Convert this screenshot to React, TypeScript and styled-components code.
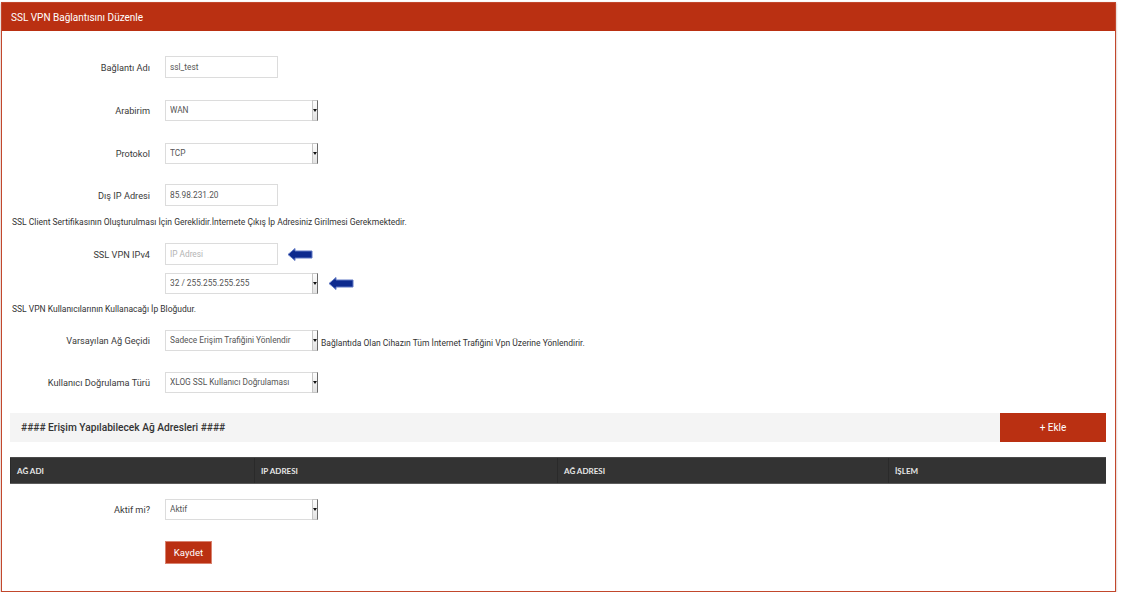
import styled, { createGlobalStyle } from 'styled-components';

const GlobalStyle = createGlobalStyle`
  html, body {
    margin: 0;
    padding: 0;
    background: #ffffff;
    font-family: Roboto, 'Liberation Sans', Arial, sans-serif;
  }
`;

const BlueArrow = () => (
  <svg width='26' height='15' viewBox='0 0 26 15'>
    <path
      d='M1 7.5 L8 1.5 L8 4 L25 4 L25 11 L8 11 L8 13.5 Z'
      fill='#0d2a8e'
      stroke='#6079c4'
      strokeWidth='1'
      strokeLinejoin='round'
    />
  </svg>
);

interface SelectProps {
  value: string;
  options?: string[];
}

const FakeSelect = ({ value, options = [] }: SelectProps) => (
  <SelectWrap>
    <SelectField defaultValue={value}>
      <option value={value}>{value}</option>
      {options.map((o) => (
        <option key={o} value={o}>
          {o}
        </option>
      ))}
    </SelectField>
    <SelectArrow>
      <Caret />
    </SelectArrow>
  </SelectWrap>
);

const App = () => {
  return (
    <>
      <GlobalStyle />
      <Panel>
        <PanelHeader>SSL VPN Bağlantısını Düzenle</PanelHeader>
        <PanelBody>
          <FormRow $top={25}>
            <Label>Bağlantı Adı</Label>
            <TextInput defaultValue='ssl_test' />
          </FormRow>

          <FormRow $top={21}>
            <Label>Arabirim</Label>
            <FakeSelect value='WAN' options={['LAN']} />
          </FormRow>

          <FormRow $top={21}>
            <Label>Protokol</Label>
            <FakeSelect value='TCP' options={['UDP']} />
          </FormRow>

          <FormRow $top={20}>
            <Label>Dış IP Adresi</Label>
            <TextInput defaultValue='85.98.231.20' />
          </FormRow>

          <HelpText $top={10}>
            SSL Client Sertifikasının Oluşturulması İçin Gereklidir.İnternete
            Çıkış İp Adresiniz Girilmesi Gerekmektedir.
          </HelpText>

          <FormRow $top={15}>
            <Label>SSL VPN IPv4</Label>
            <TextInput placeholder='IP Adresi' />
            <ArrowSlot $offset={9}>
              <BlueArrow />
            </ArrowSlot>
          </FormRow>

          <FormRow $top={7}>
            <Label />
            <FakeSelect value='32 / 255.255.255.255' />
            <ArrowSlot $offset={10}>
              <BlueArrow />
            </ArrowSlot>
          </FormRow>

          <HelpText $top={9}>
            SSL VPN Kullanıcılarının Kullanacağı İp Bloğudur.
          </HelpText>

          <FormRow $top={14}>
            <Label>Varsayılan Ağ Geçidi</Label>
            <FakeSelect value='Sadece Erişim Trafiğini Yönlendir' />
            <SideNote>
              Bağlantıda Olan Cihazın Tüm İnternet Trafiğini Vpn Üzerine
              Yönlendirir.
            </SideNote>
          </FormRow>

          <FormRow $top={20}>
            <Label>Kullanıcı Doğrulama Türü</Label>
            <FakeSelect value='XLOG SSL Kullanıcı Doğrulaması' />
          </FormRow>

          <SectionBar>
            <SectionTitle>#### Erişim Yapılabilecek Ağ Adresleri ####</SectionTitle>
            <AddButton type='button'>+ Ekle</AddButton>
          </SectionBar>

          <Table>
            <thead>
              <tr>
                <Th $width={244}>AĞ ADI</Th>
                <Th $width={303}>IP ADRESI</Th>
                <Th $width={331}>AĞ ADRESI</Th>
                <Th>İŞLEM</Th>
              </tr>
            </thead>
          </Table>

          <FormRow $top={14}>
            <Label>Aktif mi?</Label>
            <FakeSelect value='Aktif' options={['Pasif']} />
          </FormRow>

          <FormRow $top={21}>
            <Label />
            <SaveButton type='button'>Kaydet</SaveButton>
          </FormRow>
        </PanelBody>
      </Panel>
    </>
  );
};

const Panel = styled.div`
  margin: 2px 0 0 1px;
  width: 1115px;
  height: 590px;
  box-sizing: border-box;
  border: 1px solid #c2472c;
  box-shadow: 0 1px 2px rgba(120, 40, 20, 0.45);
  background: #ffffff;
  display: flex;
  flex-direction: column;
`;

const PanelHeader = styled.div`
  height: 28px;
  flex-shrink: 0;
  background: #ba3012;
  color: #ffffff;
  font-size: 10px;
  display: flex;
  align-items: center;
  padding-left: 9px;
`;

const PanelBody = styled.div`
  padding: 0 8px 0 8px;
  display: flex;
  flex-direction: column;
`;

const FormRow = styled.div<{ $top: number }>`
  display: flex;
  align-items: center;
  margin-top: ${(p) => p.$top}px;
  height: 22px;
`;

const Label = styled.label`
  width: 140px;
  flex-shrink: 0;
  margin-right: 15px;
  text-align: right;
  font-size: 9.2px;
  color: #3a3a3a;
`;

const TextInput = styled.input`
  width: 113px;
  height: 22px;
  box-sizing: border-box;
  border: 1px solid #dcdcdc;
  padding: 0 4px;
  font-family: Roboto, 'Liberation Sans', Arial, sans-serif;
  font-size: 8.3px;
  color: #555555;
  outline: none;

  &::placeholder {
    color: #b4b4b4;
  }
`;

const SelectWrap = styled.div`
  display: flex;
  width: 153px;
  height: 21px;
`;

const SelectField = styled.select`
  appearance: none;
  -webkit-appearance: none;
  flex: 1;
  min-width: 0;
  height: 21px;
  box-sizing: border-box;
  border: 1px solid #dcdcdc;
  border-right: none;
  border-radius: 0;
  background: #ffffff;
  padding: 0 4px;
  font-family: Roboto, 'Liberation Sans', Arial, sans-serif;
  font-size: 8.3px;
  color: #555555;
  outline: none;
`;

const SelectArrow = styled.span`
  width: 6px;
  height: 21px;
  box-sizing: border-box;
  border: 1px solid #c4c4c4;
  border-right: 1px solid #6a6a6a;
  background: linear-gradient(#fdfdfd, #e2e2e2);
  display: flex;
  align-items: center;
  justify-content: center;
`;

const Caret = styled.span`
  width: 0;
  height: 0;
  border-left: 2px solid transparent;
  border-right: 2px solid transparent;
  border-top: 3px solid #111111;
`;

const ArrowSlot = styled.span<{ $offset: number }>`
  display: flex;
  align-items: center;
  margin-left: ${(p) => p.$offset}px;
`;

const HelpText = styled.p<{ $top: number }>`
  margin: ${(p) => p.$top}px 0 0 2px;
  font-size: 8.5px;
  line-height: 12px;
  color: #333333;
`;

const SideNote = styled.span`
  margin-left: 3px;
  font-size: 8.5px;
  color: #333333;
  align-self: flex-end;
  padding-bottom: 3px;
`;

const SectionBar = styled.div`
  margin-top: 20px;
  height: 29px;
  width: 1096px;
  display: flex;
  align-items: center;
  background: #f4f4f4;
`;

const SectionTitle = styled.span`
  flex: 1;
  padding-left: 11px;
  font-size: 10.2px;
  font-weight: 500;
  color: #333333;
`;

const AddButton = styled.button`
  width: 106px;
  height: 29px;
  border: none;
  background: #ba3012;
  color: #ffffff;
  font-family: Roboto, 'Liberation Sans', Arial, sans-serif;
  font-size: 10px;
  cursor: pointer;
`;

const Table = styled.table`
  margin-top: 15px;
  width: 1096px;
  border-collapse: collapse;
  table-layout: fixed;
`;

const Th = styled.th<{ $width?: number }>`
  ${(p) => (p.$width ? `width: ${p.$width}px;` : '')}
  height: 26px;
  box-sizing: border-box;
  padding: 0 6px;
  background: #333333;
  border-top: 1px solid #4a4a4a;
  border-bottom: 1px solid #5c5c5c;
  border-left: 1px solid #2a2a2a;
  text-align: left;
  font-family: Lato, Roboto, sans-serif;
  font-size: 8px;
  font-weight: 700;
  color: #e6e6e6;
`;

const SaveButton = styled.button`
  width: 47px;
  height: 23px;
  border: 1px solid #d9826f;
  background: #ba3012;
  color: #ffffff;
  font-family: Roboto, 'Liberation Sans', Arial, sans-serif;
  font-size: 9.6px;
  padding: 0;
  cursor: pointer;
`;

export default App;
